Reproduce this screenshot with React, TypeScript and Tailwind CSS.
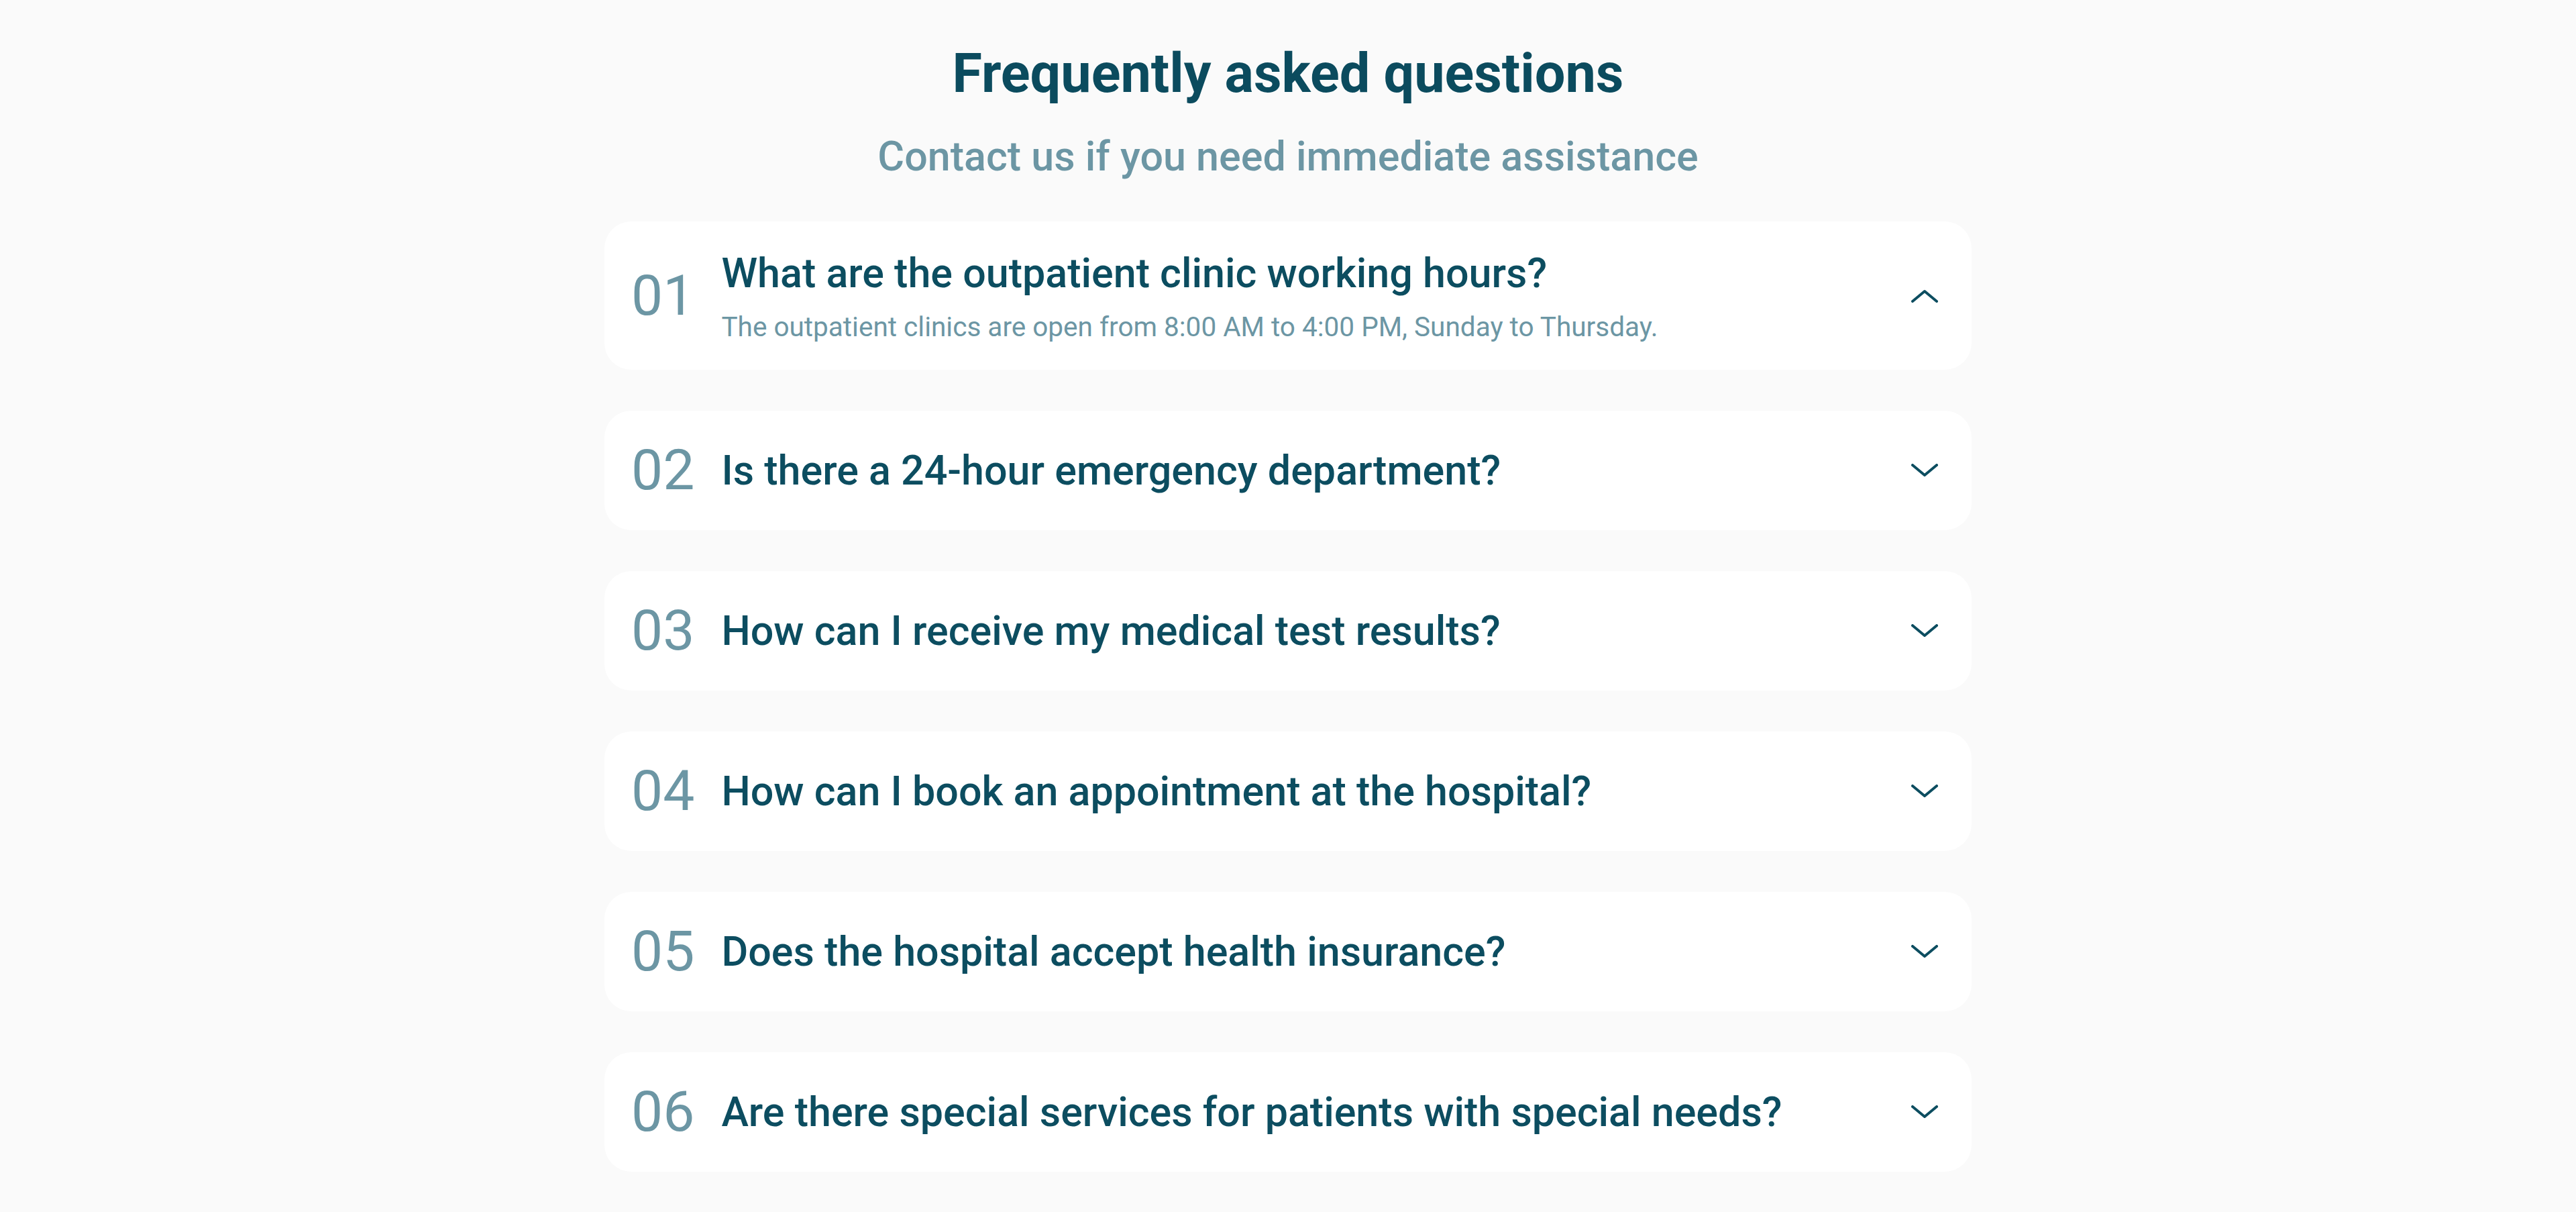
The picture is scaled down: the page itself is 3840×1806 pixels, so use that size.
import { useState } from 'react'

type Faq = {
  question: string
  answer: string
}

const faqs: Faq[] = [
  {
    question: 'What are the outpatient clinic working hours?',
    answer: 'The outpatient clinics are open from 8:00 AM to 4:00 PM, Sunday to Thursday.',
  },
  {
    question: 'Is there a 24-hour emergency department?',
    answer: 'Yes, the emergency department is open 24 hours a day, 7 days a week.',
  },
  {
    question: 'How can I receive my medical test results?',
    answer: 'Results are available through the patient portal or at the laboratory reception.',
  },
  {
    question: 'How can I book an appointment at the hospital?',
    answer: 'Appointments can be booked by phone, through the website or at the reception desk.',
  },
  {
    question: 'Does the hospital accept health insurance?',
    answer: 'Yes, the hospital works with most major health insurance providers.',
  },
  {
    question: 'Are there special services for patients with special needs?',
    answer: 'Wheelchair access, escorts and dedicated counters are available on request.',
  },
]

function Chevron({ open }: { open: boolean }) {
  return (
    <svg width="40" height="20" viewBox="0 0 40 20" fill="none" className="shrink-0">
      <polyline
        points={open ? '2,18 20,3 38,18' : '2,2 20,17 38,2'}
        stroke="#0c4d60"
        strokeWidth="4"
        strokeLinecap="round"
        strokeLinejoin="round"
      />
    </svg>
  )
}

export default function App() {
  const [openIndex, setOpenIndex] = useState<number | null>(0)

  return (
    <div className="min-h-screen bg-[#fafafa] font-['Roboto',sans-serif] flex flex-col items-center pt-[63px] pb-16">
      <h1 className="text-[81px] leading-[94px] font-bold text-[#0b4b5e]">Frequently asked questions</h1>
      <p className="mt-[41px] text-[61px] leading-[70px] font-medium text-[#6c96a4]">
        Contact us if you need immediate assistance
      </p>

      <div className="mt-[62px] w-[2038px] flex flex-col gap-[61px]">
        {faqs.map((faq, i) => {
          const open = openIndex === i
          return (
            <button
              key={faq.question}
              type="button"
              onClick={() => setOpenIndex(open ? null : i)}
              className="flex items-center bg-white rounded-[40px] pl-10 pr-[50px] py-10 text-left"
            >
              <span className="text-[84px] leading-[98px] font-normal text-[#6c96a4] shrink-0">
                {String(i + 1).padStart(2, '0')}
              </span>
              <div className="flex-1 ml-10">
                <p className="text-[61px] leading-[74px] font-medium text-[#0c4d60]">{faq.question}</p>
                {open && (
                  <p className="mt-[19px] text-[40.5px] leading-[48px] font-normal text-[#6c96a4]">{faq.answer}</p>
                )}
              </div>
              <Chevron open={open} />
            </button>
          )
        })}
      </div>
    </div>
  )
}
